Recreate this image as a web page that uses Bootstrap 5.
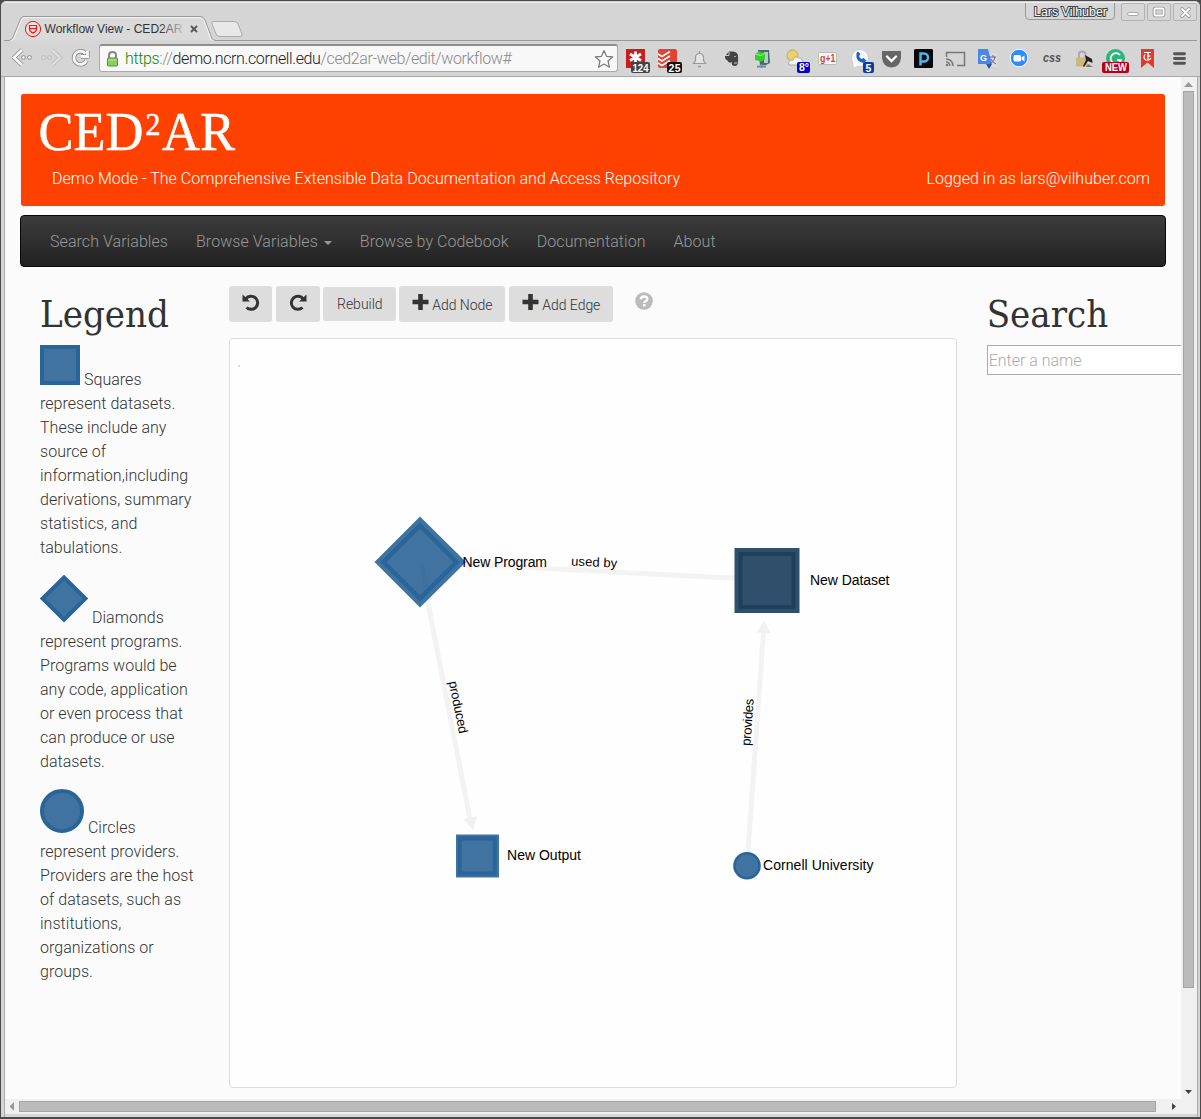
<!DOCTYPE html>
<html lang="en">
<head>
<meta charset="utf-8">
<title>Workflow View - CED2AR</title>
<link href="https://cdn.jsdelivr.net/npm/bootstrap@5.3.0/dist/css/bootstrap.min.css" rel="stylesheet">
<script src="https://cdn.jsdelivr.net/npm/bootstrap@5.3.0/dist/js/bootstrap.bundle.min.js"></script>
<style>
html,body{height:1119px;overflow:hidden}
body{font-family:Roboto,sans-serif;font-weight:300;font-size:16px;line-height:24px;color:#333;background:#4c4a4a}
svg{display:block}
.win{width:1201px;height:1119px;border:1px solid #4b4949;border-bottom-width:2px;border-radius:6px 6px 2px 2px;background:#d5d5d5;overflow:hidden}
.titlebar{height:40px;flex:none}
.toolbar{height:36px;flex:none;padding-left:3px;border-bottom:1px solid #aaa}
.omni{width:519px;height:28px;margin-top:-1px;background:#f8f8f8;border:1px solid #aaa;border-top:2px solid #8f8f8f;border-radius:3px;line-height:25px;letter-spacing:-.37px;color:#888;padding-left:6px;padding-right:3px}
.omni b{font-weight:300;color:#098609}.omni i{font-style:normal;color:#222}
.addr{margin-left:2px}
.frame{height:1040px;margin:0 2px 0 3px;border-left:1px solid #aaa;border-right:1px solid #aaa}
.page-view{width:1176px;height:1022px;flex:none;overflow:hidden;background:#fbfbfb;padding:17px 15px 0 15px;letter-spacing:.03px}
.vbar{width:16px;background:#f0f0f0}
.hbar{height:15px;background:#f0f0f0}
.banner{width:1144px;height:112px;margin-left:1px;background:#ff4100;border-radius:3px;color:#fff;box-shadow:0 0 1px #aaa}
.banner-line{padding:4px 15px 0 31px}
.menu{width:1146px;height:52px;margin-top:9px;border:1px solid #080808;border-radius:4px;background:linear-gradient(#3c3c3c,#222);padding:0 15px}
.menu .nav-link{padding:14px 14px 12px;color:#999;line-height:24px;letter-spacing:.06px}
.menu .dropdown-toggle::after{border-width:4px;border-bottom:0;margin-left:6px;vertical-align:2px}
.work{width:1136px;margin:19px 0 0 5px;--bs-gutter-x:30px}
.head{font-family:"DejaVu Serif Condensed","DejaVu Serif",serif;font-stretch:condensed;font-weight:400;font-size:38px;line-height:44px;height:44px;margin:6px 0 9px;letter-spacing:0;color:#333}
.key{margin-bottom:15px;white-space:nowrap}
.key svg{display:inline-block;vertical-align:baseline}
.tool{background:#ddd;border:0;border-radius:3px;font-size:14px;font-weight:300;line-height:20px;color:#333;height:36px;padding:0;display:flex;align-items:center;justify-content:center}
.tool-label{padding:2px 0 0 3px;letter-spacing:-.05px}
.stage{width:728px;height:750px;margin-top:16px;border:1px solid #ddd;border-radius:4px;background:#fefefe;overflow:hidden}
.find{width:222px;height:30px;border:1px solid #a9a9a9;background:#fff;padding:0 1px;font-weight:300;font-size:16px;display:block}
.find::placeholder{color:#aaa;opacity:1}
svg text{font-family:"Liberation Sans",sans-serif;letter-spacing:0}
</style>
</head>
<body>
<div class="win d-flex flex-column">
  <div class="titlebar">
    <svg width="1199" height="40" viewBox="1 1 1199 40">
      <defs>
        <linearGradient id="fade" gradientUnits="userSpaceOnUse" x1="160" x2="183" y1="0" y2="0"><stop stop-color="#333"/><stop offset="1" stop-color="#333" stop-opacity="0.15"/></linearGradient>
      </defs>
      <path d="M5 2.5H1197" stroke="#eee"/>
      <path d="M4 40.5H9Q12 40 13 37L20 20Q21 16.500 24 16.500H200Q203.500 16.500 205 20L211 36Q212 40.500 216 40.500H1197" fill="#dadada" stroke="#999"/>
      <path d="M4 41.500H10Q13 41 14 38L21 21Q22 17.500 25 17.500H199Q202.500 17.500 204 21L210 37Q211 41.500 215 41.500" fill="none" stroke="#f2f2f2"/>
      <path d="M214 21.500H234Q237 21.500 238 24L242 34Q243 36.500 240 36.500H220Q217 36.500 216 34L212 24Q211 21.500 214 21.500Z" fill="#e8e8e8" stroke="#aaa"/>
      <circle cx="33" cy="29" r="7.600" fill="#f3e0e0" stroke="#e11" stroke-width="1"/>
      <path d="M29.500 25.500H36.500V29Q36.500 31.500 33 33Q29.500 31.500 29.500 29ZM29.500 28.500H36.500" fill="none" stroke="#e11" stroke-width="1.200"/>
      <text x="44.500" y="33" font-size="12" textLength="138" lengthAdjust="spacingAndGlyphs" fill="url(#fade)">Workflow View - CED2AR</text>
      <path d="M191 26L197 32M197 26L191 32" stroke="#555" stroke-width="1.800"/>
      <path d="M1025.500 3V16Q1025.500 19.500 1029 19.500H1111Q1114.500 19.500 1114.500 16V3" fill="#d7d7d7" stroke="#999"/>
      <text x="1034" y="15.500" font-size="12" textLength="73" lengthAdjust="spacingAndGlyphs" fill="#fff" stroke="#444" stroke-width="2" paint-order="stroke">Lars Vilhuber</text>
      <g fill="#d7d7d7" stroke="#b2b2b2"><rect x="1121.500" y="3.500" width="23" height="17" rx="1.500"/><rect x="1147.500" y="3.500" width="23" height="17" rx="1.500"/><rect x="1173.500" y="3.500" width="23" height="17" rx="1.500"/></g>
      <g fill="none" stroke="#999" stroke-width="3.600" stroke-linecap="round"><path d="M1129 14H1137M1182 9L1189 16M1189 9L1182 16"/><rect x="1154.500" y="8.500" width="9" height="7" rx="1"/></g>
      <g fill="none" stroke="#fff" stroke-width="1.800" stroke-linecap="round"><path d="M1129 14H1137M1182 9L1189 16M1189 9L1182 16"/><rect x="1154.500" y="8.500" width="9" height="7" rx="1"/></g>
    </svg>
  </div>
  <div class="toolbar d-flex align-items-center">
    <svg width="95" height="35" viewBox="4 41 95 35" fill="none">
      <g stroke="#888" stroke-width="4.400" stroke-linejoin="round"><path d="M22 50L14 57.500L22 65"/><path d="M85.500 53.500A6.600 6.600 0 1 0 86.500 60.500M87.500 51V56.500H81"/></g>
      <g stroke="#f7f7f7" stroke-width="2.800"><path d="M22 50L14 57.500L22 65"/><path d="M85.500 53.500A6.600 6.600 0 1 0 86.500 60.500M87.500 51V56.500H81"/></g>
      <g stroke="#888" fill="#f4f4f4"><circle cx="23.500" cy="57.500" r="1.900"/><circle cx="29.500" cy="57.500" r="1.900"/></g>
      <path d="M52 50L60 57.500L52 65" stroke="#bbb" stroke-width="4"/><path d="M52 50L60 57.500L52 65" stroke="#dedede" stroke-width="2.400"/>
      <g stroke="#bbb" fill="#ddd"><circle cx="43.500" cy="57.500" r="1.900"/><circle cx="49.500" cy="57.500" r="1.900"/></g>
    </svg>
    <div class="omni d-flex align-items-center">
      <svg width="13" height="18" viewBox="0 0 13 18" class="me-1"><path d="M3 9V5Q3 2 6.500 2T10 5V9" fill="none" stroke="#888" stroke-width="2"/><rect x="1.500" y="8" width="10" height="8" rx="1" fill="#8ccc62" stroke="#4b9730"/><path d="M2 10H11" stroke="#b8e29a"/></svg>
      <span class="addr text-nowrap"><b>https</b>://<i>demo.ncrn.cornell.edu</i>/ced2ar-web/edit/workflow#</span>
      <svg width="20" height="20" viewBox="0 0 20 20" class="ms-auto"><path d="M10 1.500L12.500 7.300L18.700 7.900L14 12L15.400 18.200L10 15L4.600 18.200L6 12L1.300 7.900L7.500 7.300Z" fill="#fafafa" stroke="#777" stroke-width="1.200" stroke-linejoin="round"/></svg>
    </div>
    <svg width="579" height="35" viewBox="618 41 579 35">
      <!-- password manager -->
      <rect x="626" y="49" width="19" height="19" fill="#cc1d1d"/><path d="M635.500 51.500V63M630 54L641 60.500M641 54L630 60.500" stroke="#fff" stroke-width="2.800"/>
      <rect x="631" y="62" width="19" height="11" rx="2" fill="#444"/><text x="632.500" y="71.500" font-size="10" font-weight="700" textLength="16" lengthAdjust="spacingAndGlyphs" fill="#fff">124</text>
      <!-- task list -->
      <rect x="658" y="49" width="19" height="19" rx="2" fill="#e14434"/><path d="M658 54L662 56.500L670 51.500M658 58.500L662 61L670 56M658 63L662 65.500L670 60.500" fill="none" stroke="#fff" stroke-width="1.500"/>
      <rect x="667" y="62" width="15" height="11" rx="2" fill="#111"/><text x="668.500" y="71.500" font-size="10.500" font-weight="700" textLength="12" fill="#fff">25</text>
      <path d="M693.500 63.500L695.500 60.500V57Q696 53.500 699.500 53.500T703.500 57V60.500L705.500 63.500ZM699.500 51V53" fill="#e4e4e4" stroke="#999" stroke-width="1.200"/><path d="M698 66.500H701" stroke="#999" stroke-width="1.500"/>
      <!-- elephant -->
      <path d="M725 56L729 51.500H733Q738 52 738 56Q739 66 735 66Q731 66 732 62Q729 64 727 60Q725 60 725 56Z" fill="#444"/><path d="M725 55.500H729V52M734 63H737" stroke="#ccc" fill="none"/><path d="M734 56.500H736" stroke="#aaa"/>
      <!-- archive -->
      <path d="M758 50H769L770 63L766 65H760Z" fill="#496b78"/><rect x="764" y="52" width="4" height="11" fill="#bdc8cb"/><path d="M755 54L759 51.500L765 53V59L761 61.500L755 60Z" fill="#34cf28"/><path d="M755 54L761 55.500L765 53" fill="none" stroke="#a2f18e"/><path d="M757 66.500H766M761.500 64V68" stroke="#6d8da0" stroke-width="1.800"/>
      <!-- weather -->
      <circle cx="792.500" cy="55.500" r="5.500" fill="#ead26b" stroke="#c0a850"/><path d="M789 65Q787 60 793 60Q795 55 799 58Q801 56 804 65Z" fill="#f2f2f2" stroke="#aaa"/>
      <rect x="797" y="62" width="13" height="11" rx="2" fill="#0000c8"/><text x="799" y="71" font-size="10.500" font-weight="700" fill="#fff">8°</text>
      <rect x="818.500" y="52.500" width="18" height="12" rx="1" fill="#f8f8f8" stroke="#bbb"/><text x="820" y="62" font-size="10.500" font-weight="700" textLength="15.500" lengthAdjust="spacingAndGlyphs" fill="#d34836">g+1</text>
      <!-- phone -->
      <circle cx="860" cy="58" r="8.500" fill="#f8f8f8" stroke="#ccc"/><path d="M854 67L853 62L858 66Z" fill="#fff"/><path d="M856.500 53Q855 62 864 63L866.500 60.500L863.500 58L861.500 59Q859.500 58 859 56L860.500 54L858 51.500Z" fill="#1564cc"/>
      <rect x="863" y="62" width="11" height="11" rx="2" fill="#0d3d9c"/><text x="865.500" y="71.500" font-size="10.500" font-weight="700" fill="#fff">5</text>
      <path d="M882 51H901V58Q900 67 891.500 67.500Q883 67 882 58Z" fill="#666"/><path d="M887 56.500L891.500 61L896 56.500" fill="none" stroke="#fff" stroke-width="2.400" stroke-linecap="round"/>
      <rect x="914" y="49" width="19" height="19" rx="1.500" fill="#090909"/><path d="M920.500 65.500V53.500H924A3.800 3.800 0 0 1 924 61.500H921" fill="none" stroke="#45b8f5" stroke-width="2.500"/>
      <path d="M946.500 57V52.500H964.500V65.500H957M946 59Q952.500 59 953 66M946 62Q949.500 62 950 66" fill="none" stroke="#777" stroke-width="1.500"/><circle cx="947" cy="65" r="1.300" fill="#777"/>
      <!-- translate -->
      <rect x="986" y="53" width="11" height="14" fill="#ddd"/><path d="M978 49H988L992 64H978Z" fill="#4a88e8"/><path d="M986 64H992L989 69Z" fill="#2754ad"/><text x="980" y="60.500" font-size="9" font-weight="700" fill="#fff">G</text><path d="M989 57H996M993 55V57M990 64Q995 61 995 57M991 59Q993 63 996 64" fill="none" stroke="#668"/>
      <circle cx="1019" cy="58" r="8.800" fill="#2d8cff" stroke="#fff"/><rect x="1013.500" y="55" width="7.500" height="6.500" rx="1.500" fill="#fff"/><path d="M1021.500 57.500L1024.500 55.500V61.500L1021.500 59.500Z" fill="#fff"/>
      <text x="1043" y="62" font-size="13.500" font-weight="700" font-style="italic" textLength="18" lengthAdjust="spacingAndGlyphs" fill="#555">css</text>
      <path d="M1079 59V54Q1079 51.500 1082 51.500T1085.500 54V59" fill="none" stroke="#aaa" stroke-width="2"/><rect x="1076" y="57.500" width="11" height="9" rx="1" fill="#cdb87b"/><path d="M1085 55L1092 59L1092.500 63L1088 61L1084 67L1083 66L1086 60Z" fill="#222"/><path d="M1086 67L1088 64L1093 67Z" fill="#777"/>
      <circle cx="1115.500" cy="58.500" r="9.500" fill="#28b779"/><path d="M1120 55A5.300 5.300 0 1 0 1121 60H1117" fill="none" stroke="#fff" stroke-width="1.800"/>
      <rect x="1102" y="62" width="27" height="11" rx="2" fill="#b4001c"/><text x="1105" y="71.200" font-size="10.500" font-weight="700" textLength="22" lengthAdjust="spacingAndGlyphs" fill="#fff">NEW</text>
      <path d="M1141 49H1154V68L1147.500 62.500L1141 68Z" fill="#e03b2b"/><path d="M1144 52.500H1151M1148 52V60.500M1150.500 56H1147M1145 54.500Q1142.500 58 1146 60Q1149 61 1151 58" fill="none" stroke="#fff" stroke-width="1.200"/>
      <path d="M1174.500 53.700H1184.500M1174.500 58.500H1184.500M1174.500 63.300H1184.500" stroke="#555" stroke-width="2.900" stroke-linecap="round"/>
    </svg>
  </div>
  <div class="frame">
    <div class="d-flex">
      <main class="page-view">
        <header class="banner">
          <svg width="260" height="69" viewBox="21 94 260 69" fill="#fff" stroke="#fff" stroke-width=".5">
            <text x="38.500" y="150" font-size="54" textLength="105" lengthAdjust="spacingAndGlyphs" style="font-family:'Liberation Serif',serif">CED</text>
            <text x="145.500" y="135" font-size="31" textLength="15" lengthAdjust="spacingAndGlyphs" style="font-family:'Liberation Serif',serif">2</text>
            <text x="162" y="150" font-size="54" textLength="73" lengthAdjust="spacingAndGlyphs" style="font-family:'Liberation Serif',serif">AR</text>
          </svg>
          <div class="banner-line d-flex justify-content-between"><span>Demo Mode - The Comprehensive Extensible Data Documentation and Access Repository</span><span>Logged in as lars@vilhuber.com</span></div>
        </header>
        <nav class="menu">
          <ul class="nav flex-nowrap text-nowrap">
            <li class="nav-item"><a class="nav-link" href="#">Search Variables</a></li>
            <li class="nav-item"><a class="nav-link dropdown-toggle" href="#">Browse Variables</a></li>
            <li class="nav-item"><a class="nav-link" href="#">Browse by Codebook</a></li>
            <li class="nav-item"><a class="nav-link" href="#">Documentation</a></li>
            <li class="nav-item"><a class="nav-link" href="#">About</a></li>
          </ul>
        </nav>
        <div class="row work">
          <aside class="col-2">
            <h1 class="head">Legend</h1>
            <p class="key"><svg width="40" height="40"><rect x="2" y="2" width="36" height="36" fill="#4073a0" stroke="#296598" stroke-width="4"/></svg> Squares<br>represent datasets.<br>These include any<br>source of<br>information,including<br>derivations, summary<br>statistics, and<br>tabulations.</p>
            <p class="key"><svg width="48" height="48"><path d="M24 2.500L45.500 23.500L24 44.700L2.500 23.500Z" fill="#4073a0" stroke="#296598" stroke-width="4"/></svg> Diamonds<br>represent programs.<br>Programs would be<br>any code, application<br>or even process that<br>can produce or use<br>datasets.</p>
            <p class="key"><svg width="44" height="44"><circle cx="22" cy="22" r="20" fill="#4073a0" stroke="#296598" stroke-width="4"/></svg> Circles<br>represent providers.<br>Providers are the host<br>of datasets, such as<br>institutions,<br>organizations or<br>groups.</p>
          </aside>
          <section class="col-8">
            <div class="d-flex align-items-center">
              <button class="tool" style="width:43px" aria-label="Undo"><svg width="20" height="22" viewBox="0 0 20 22"><path d="M5 5.500A6.600 6.600 0 1 1 5.500 14.500" fill="none" stroke="#333" stroke-width="3"/><path d="M1.500 1.500V8.500H9Z" fill="#333"/></svg></button>
              <button class="tool ms-1" style="width:44px" aria-label="Redo"><svg width="20" height="22" viewBox="0 0 20 22"><path d="M15 5.500A6.600 6.600 0 1 0 14.500 14.500" fill="none" stroke="#333" stroke-width="3"/><path d="M18.500 1.500V8.500H11Z" fill="#333"/></svg></button>
              <button class="tool" style="width:73px;height:34px;margin-left:3px">Rebuild</button>
              <button class="tool" style="width:106px;margin-left:3px"><svg width="17" height="20" viewBox="0 0 17 20" class="mb-1"><path d="M8.500 2V18M.5 10H16.500" stroke="#333" stroke-width="4.600"/></svg><span class="tool-label">Add Node</span></button>
              <button class="tool ms-1" style="width:104px"><svg width="17" height="20" viewBox="0 0 17 20" class="mb-1"><path d="M8.500 2V18M.5 10H16.500" stroke="#333" stroke-width="4.600"/></svg><span class="tool-label">Add Edge</span></button>
              <svg width="18" height="24" viewBox="0 0 18 24" style="margin-left:22px"><circle cx="9" cy="9" r="8.800" fill="#bbb"/><path d="M5.800 7.300Q6 4.500 9.200 4.500T12.300 7.200Q12.300 8.500 10.500 9.300Q9.200 10 9.200 11" fill="none" stroke="#fff" stroke-width="2.400"/><rect x="8" y="12" width="2.500" height="2.400" fill="#fff"/></svg>
            </div>
            <div class="stage">
              <svg width="726" height="748" viewBox="230 339 726 748" font-size="14">
                <rect x="238" y="365" width="2" height="2" fill="#ddd"/>
                <g stroke="#f3f3f3" stroke-width="5"><path d="M420 562L767 580M420 562L470 819M747 866L763.500 632"/></g>
                <path d="M462 565L472 561V572ZM473 830L463.500 819L477 816ZM764 621L771 633L756.500 632.500Z" fill="#f1f1f1"/>
                <path d="M420 516.500L466 562L420 607.500L374.500 562Z" fill="#4073a0"/><path d="M420 525.500L456.500 562L420 598.500L383.500 562Z" fill="#4073a0" stroke="#296598" stroke-width="4.500"/>
                <path d="M421.500 564L426 587" stroke="#3d709e" stroke-width="4"/>
                <rect x="734.500" y="548" width="65" height="65" fill="#304f6b"/><rect x="740.500" y="554" width="53" height="53" fill="#304f6b" stroke="#1e405d" stroke-width="4"/>
                <rect x="456" y="834.500" width="43" height="43" fill="#4073a0"/><rect x="459.700" y="838.500" width="35" height="35" fill="#4073a0" stroke="#296598" stroke-width="4"/>
                <circle cx="747" cy="865.700" r="12.500" fill="#4073a0" stroke="#296598" stroke-width="2.600"/>
                <g fill="#000"><text x="462.500" y="567" textLength="84.500">New Program</text><text x="810" y="585" textLength="79.500">New Dataset</text><text x="507" y="860" textLength="74">New Output</text><text x="763" y="870" textLength="110.500">Cornell University</text></g>
                <g fill="#000" font-size="13" text-anchor="middle"><text transform="translate(594 566.500) rotate(2.500)" textLength="46">used by</text><text transform="translate(454 708) rotate(78.500)" textLength="53">produced</text><text transform="translate(752 722.500) rotate(-86)" textLength="47">provides</text></g>
              </svg>
            </div>
          </section>
          <aside class="col-2">
            <h1 class="head">Search</h1>
            <input class="find" placeholder="Enter a name">
          </aside>
        </div>
      </main>
      <div class="vbar"><svg width="16" height="1022" viewBox="1181 77 16 1022"><path d="M1184 87H1193L1188.500 82Z" fill="#999"/><rect x="1183.500" y="91.500" width="10" height="896" fill="#bbb" stroke="#a5a5a5"/><path d="M1185 1090H1192L1188.500 1094Z" fill="#444"/></svg></div>
    </div>
    <div class="hbar"><svg width="1192" height="15" viewBox="5 1099 1192 15"><path d="M14 1102V1111L9.500 1106.500Z" fill="#999"/><rect x="19.500" y="1101.500" width="1136" height="10" fill="#bbb" stroke="#a5a5a5"/><path d="M1172 1103V1110L1176 1106.500Z" fill="#444"/></svg></div>
  </div>
</div>
</body>
</html>
